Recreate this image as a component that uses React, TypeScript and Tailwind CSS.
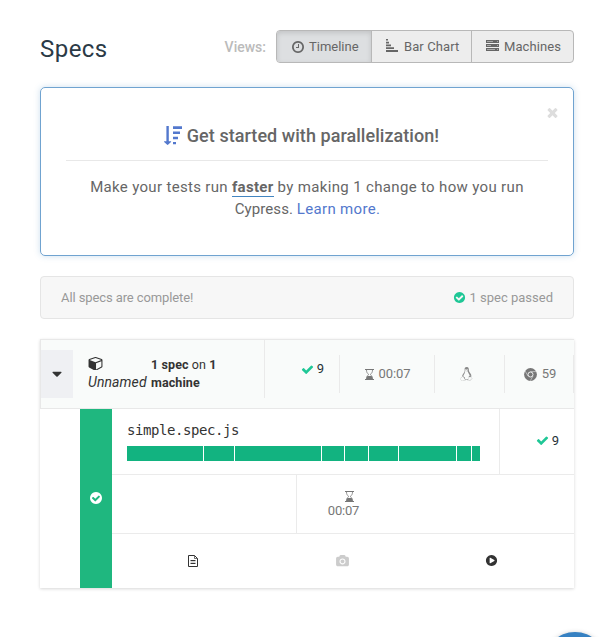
import React from "react";
import { FaLinux } from "react-icons/fa";

const CLOCK =
  "M1024 544v448q0 14-9 23t-23 9h-320q-14 0-23-9t-9-23v-64q0-14 9-23t23-9h224v-352q0-14 9-23t23-9h64q14 0 23 9t9 23zm416 352q0-148-73-273t-198-198-273-73-273 73-198 198-73 273 73 273 198 198 273 73 273-73 198-198 73-273zm224 0q0 209-103 385.5t-279.5 279.5-385.5 103-385.5-103-279.5-279.5-103-385.5 103-385.5 279.5-279.5 385.5-103 385.5 103 279.5 279.5 103 385.5z";
const CHECK =
  "M1671 566q0 40-28 68l-724 724-136 136q-28 28-68 28t-68-28l-136-136-362-362q-28-28-28-68t28-68l136-136q28-28 68-28t68 28l294 295 656-657q28-28 68-28t68 28l136 136q28 28 28 68z";
const CHECK_CIRCLE =
  "M1412 734q0-28-18-46l-91-90q-19-19-45-19t-45 19l-408 407-226-226q-19-19-45-19t-45 19l-91 90q-18 18-18 46 0 27 18 45l362 362q19 19 45 19 27 0 46-19l543-543q18-18 18-45zm252 162q0 209-103 385.5t-279.5 279.5-385.5 103-385.5-103-279.5-279.5-103-385.5 103-385.5 279.5-279.5 385.5-103 385.5 103 279.5 279.5 103 385.5z";
const CARET =
  "M1408 704q0 26-19 45l-448 448q-19 19-45 19t-45-19l-448-448q-19-19-19-45t19-45 45-19h896q26 0 45 19t19 45z";
const TIMES =
  "M1490 1322q0 40-28 68l-136 136q-28 28-68 28t-68-28l-294-294-294 294q-28 28-68 28t-68-28l-136-136q-28-28-28-68t28-68l294-294-294-294q-28-28-28-68t28-68l136-136q28-28 68-28t68 28l294 294 294-294q28-28 68-28t68 28l136 136q28 28 28 68t-28 68l-294 294 294 294q28 28 28 68z";
const CUBE =
  "M832 1727l640-349v-636l-640 233v752zm-64-865l698-254-698-254-698 254zm832-254v768q0 35-18 65t-49 47l-704 384q-28 16-61 16t-61-16l-704-384q-31-17-49-47t-18-65v-768q0-40 23-73t61-47l704-256q22-8 44-8t44 8l704 256q38 14 61 47t23 73z";
const CAMERA =
  "M960 672q119 0 203.5 84.5t84.5 203.5-84.5 203.5-203.5 84.5-203.5-84.5-84.5-203.5 84.5-203.5 203.5-84.5zm704-416q106 0 181 75t75 181v896q0 106-75 181t-181 75h-1408q-106 0-181-75t-75-181v-896q0-106 75-181t181-75h224l51-136q19-49 69.5-84.5t103.5-35.5h512q53 0 103.5 35.5t69.5 84.5l51 136h224zm-704 1152q185 0 316.5-131.5t131.5-316.5-131.5-316.5-316.5-131.5-316.5 131.5-131.5 316.5 131.5 316.5 316.5 131.5z";
const PLAY =
  "M896 128q209 0 385.5 103t279.5 279.5 103 385.5-103 385.5-279.5 279.5-385.5 103-385.5-103-279.5-279.5-103-385.5 103-385.5 279.5-279.5 385.5-103zm384 823q32-18 32-55t-32-55l-544-320q-31-19-64-1-32 19-32 56v640q0 37 32 56 16 8 32 8 17 0 32-9z";

function Glyph({ d, box = "0 0 1792 1792", className }: { d: string; box?: string; className: string }) {
  return (
    <svg viewBox={box} className={`shrink-0 ${className}`} fill="currentColor" aria-hidden="true">
      <path d={d} />
    </svg>
  );
}

function BarsIcon() {
  return (
    <svg viewBox="0 0 12 13" className="h-[13px] w-3 shrink-0" fill="currentColor" aria-hidden="true">
      <path d="M0 0h2v1.600H0zM0 2.700h3v1.800H0zM0 5.500h5v1.800H0zM0 8.300h8v1.800H0zM0 11h12v2H0z" />
    </svg>
  );
}

function ServerIcon() {
  return (
    <svg viewBox="0 0 13 11" className="h-[11px] w-[13px] shrink-0" aria-hidden="true">
      <path d="M0 0h13v3H0zM0 4h13v3H0zM0 8h13v3H0z" fill="currentColor" />
      <path d="M1 1.500h6M1 5.500h4M1 9.500h8M11 1.500h1M11 5.500h1M11 9.500h1" stroke="#ededed" strokeWidth=".5" />
    </svg>
  );
}

function SortIcon() {
  return (
    <svg viewBox="0 0 18 19" className="h-[19px] w-[18px] shrink-0 text-[#5378cd]" fill="currentColor" aria-hidden="true">
      <path d="M2.4 0h2.4v15.2h2.1q.6.3.1.8l-3 2.8q-.4.3-.8 0L.1 16q-.4-.6.2-.8h2.1zM9 .3h9v2.6H9zM9 5.4h7v2.5H9zM9 10.800h5v2.4H9zM9 16h3v2.300H9z" />
    </svg>
  );
}

function ChromeIcon() {
  return (
    <svg viewBox="0 0 13 13" className="size-[13px] shrink-0" aria-hidden="true">
      <circle cx="6.5" cy="6.5" r="6.4" fill="currentColor" />
      <path d="M6.500 3.600h5.800M4 8L1.200 3.100M9 8l-2.700 4.800" stroke="#f9fbfa" strokeWidth=".5" />
      <circle cx="6.500" cy="6.500" r="2.500" fill="currentColor" stroke="#f9fbfa" strokeWidth=".9" />
    </svg>
  );
}

function Hourglass() {
  return (
    <svg viewBox="0 0 9 11" className="h-[11px] w-[9px] shrink-0" aria-hidden="true">
      <path d="M0 .5h9M0 10.500h9" stroke="currentColor" />
      <path d="M1.500 1c0 2.500.9 3.300 2.200 4.500C2.400 6.700 1.500 7.500 1.500 10M7.500 1c0 2.500-.9 3.300-2.200 4.500C6.600 6.700 7.500 7.500 7.500 10" fill="none" stroke="currentColor" strokeWidth=".8" />
      <path d="M1.400 10.200c0-1.500.4-2.400 1.100-3.100h4c.7.700 1.100 1.600 1.100 3.100z" fill="currentColor" />
    </svg>
  );
}

function DocIcon() {
  return (
    <svg viewBox="0 0 10 12" className="h-3 w-[10px] shrink-0" fill="none" stroke="currentColor" aria-hidden="true">
      <path d="M.5.5h6l3 3v8h-9z" />
      <path d="M6.500.5v3h3" strokeWidth=".7" />
      <path d="M2.500 5.500h5M2.500 8.500h5" />
      <path d="M2.500 7h5" strokeOpacity=".4" />
    </svg>
  );
}

const tests = [76, 30, 86, 22, 23, 29, 57, 14, 8];

export default function App() {
  return (
    <div className="relative flex h-[637px] w-[614px] flex-col overflow-hidden bg-white pl-10 pr-10 pt-[30px] font-[Roboto,sans-serif] text-[13px] leading-[18px] text-[#333]">
      <header className="flex h-[33px] w-[534px] items-center">
        <h2 className="mt-[5px] flex-1 text-[24px] leading-8 tracking-[0.45px] text-[#2b3a46]">Specs</h2>
        <span className="mr-[10px] text-[14px] font-medium text-[#bbb]">Views:</span>
        <div className="flex h-[33px] w-[298px] rounded-[4px] border border-[#b8b8b8] bg-[#ededed] text-[#666]">
          <button className="flex w-[94px] shrink-0 items-center rounded-l-[3px] bg-[#dddfe1] pl-[14px] shadow-[inset_0_2px_5px_rgba(0,0,0,0.125)]">
            <Glyph d={CLOCK} className="mr-[4px] size-[14px]" />
            Timeline
          </button>
          <button className="flex w-[100px] shrink-0 items-center border-l border-[#b8b8b8] pl-[14px] tracking-[0.1px]">
            <span className="-mt-[2px] mr-[6px]"><BarsIcon /></span>
            Bar Chart
          </button>
          <button className="flex flex-1 items-center border-l border-[#b8b8b8] pl-[14px] tracking-[0.1px]">
            <span className="-mt-[2px] mr-[5px]"><ServerIcon /></span>
            Machines
          </button>
        </div>
      </header>

      <section className="relative mt-6 h-[169px] w-[534px] shrink-0 rounded-[5px] border border-[#70a3d0] px-[25px] pt-9 text-center shadow-[0_0_6px_rgba(60,130,190,0.25)]">
        <Glyph d={TIMES} className="absolute right-[13px] top-[17px] size-[15px] text-[#ddd]" />
        <h3 className="flex h-[37px] items-start justify-center gap-[5px] border-b border-[#e8e8e8] pr-[11px] text-[18px] font-medium leading-[23px] tracking-[0.05px] text-[#666]">
          <span className="mt-[2px]"><SortIcon /></span>
          Get started with parallelization!
        </h3>
        <p className="mt-[15px] text-[15px] leading-[22px] tracking-[0.32px] text-[#666]">
          Make your tests run{" "}
          <span className="border-b border-[#4285c0] font-bold tracking-[0.3px]">faster</span>{" "}
          <span className="tracking-[0.34px]">by making 1 change to how you run</span>
          <br />
          <span className="tracking-[0.08px]">Cypress. </span>
          <a className="-mr-px text-[#5378cd]">Learn more.</a>
        </p>
      </section>

      <section className="mt-5 flex h-[43px] w-[534px] shrink-0 items-center justify-between rounded-[4px] border border-[#e5e5e5] bg-[#f7f7f7] px-5 text-[#999]">
        <span className="tracking-[-0.1px]">All specs are complete!</span>
        <span className="flex items-center">
          <Glyph d={CHECK_CIRCLE} className="mr-[4px] size-[13px] text-[#1fc796]" />
          1 spec passed
        </span>
      </section>

      <section className="mt-5 flex h-[249px] w-[534px] shrink-0 flex-col border-t border-[#e8e8e8] shadow-[0_1px_3px_rgba(0,0,0,0.16)]">
        <div className="flex h-[69px] shrink-0 border-b border-l border-b-[#e8e8e8] border-l-[#e8e8e8] bg-[#f9fbfa]">
          <div className="mt-[10px] flex h-12 w-8 shrink-0 items-center justify-center bg-[#eff0f3]">
            <Glyph d={CARET} className="size-4" />
          </div>
          <div className="flex h-[58px] w-[192px] shrink-0 border-r border-[#eaeaea] pl-[15px]">
            <div className="w-[63px] pt-[16px]">
              <Glyph d={CUBE} box="-128 0 1792 1792" className="-mt-px mb-px size-[15px]" />
              <div className="mt-[2px] text-[14px] italic leading-5 tracking-[0.1px]">Unnamed</div>
            </div>
            <div className="pt-4 text-[12.500px] font-bold tracking-[0.1px]">
              1 spec <span className="font-normal">on</span> 1<br />machine
            </div>
          </div>
          <div className="flex w-[74px] shrink-0 pt-[20px]">
            <div className="flex h-[18px] flex-1 items-center justify-end pr-[15px] text-[#263238]">
              <Glyph d={CHECK} className="mr-[3px] size-[13px] text-[#1fc796]" />9
            </div>
          </div>
          <div className="mt-[15px] flex h-[38px] flex-1 text-[#777]">
            <div className="flex w-[95px] items-center justify-center gap-[5px] border-l border-[#eaeaea] pl-px tracking-[-0.1px]"><Hourglass />00:07</div>
            <div className="flex w-[70px] items-center justify-center border-l border-[#eaeaea] pr-[6px] text-[#888]"><FaLinux className="h-[14px] w-[13px]" /></div>
            <div className="flex w-[70px] items-center justify-center gap-[5px] border-x border-[#eaeaea] pl-[2px]"><ChromeIcon />59</div>
          </div>
        </div>

        <div className="flex min-h-0 flex-1 pl-10">
          <div className="flex w-8 shrink-0 items-center justify-center bg-[#1fb77f] pb-[2px] text-white">
            <Glyph d={CHECK_CIRCLE} className="size-[14px]" />
          </div>
          <div className="flex flex-1 flex-col">
            <div className="flex h-[66px] border-b border-[#ebebeb]">
              <div className="w-[388px] shrink-0 border-r border-[#ebebeb] pl-[15px] pt-[12px]">
                <div className="font-['DejaVu_Sans_Mono',monospace] text-[14px] leading-[18px] tracking-[-0.430px]">simple.spec.js</div>
                <div className="mt-[7px] flex h-[15px] gap-px">
                  {tests.map((w, i) => (
                    <div key={i} className="shrink-0 bg-[#12b380]" style={{ width: w }} />
                  ))}
                </div>
              </div>
              <div className="flex flex-1 items-center justify-end pb-[2px] pr-[15px] text-[#263238]">
                <Glyph d={CHECK} className="mr-[3px] size-[13px] text-[#1fc796]" />9
              </div>
            </div>
            <div className="flex h-[59px] border-b border-[#ebebeb]">
              <div className="w-[184px]" />
              <div className="flex w-[95px] flex-col items-center border-l border-[#ebebeb] pt-[16px] leading-[15px] text-[#777]">
                <span className="ml-[11px] h-[11px]"><Hourglass /></span>
                <span className="mr-px mt-[1px] tracking-[-0.2px]">00:07</span>
              </div>
            </div>
            <div className="flex flex-1 items-center">
              <div className="flex w-[162px] justify-center"><DocIcon /></div>
              <div className="flex w-[137px] justify-center text-[#ccc]"><Glyph d={CAMERA} box="0 0 1920 1792" className="h-[12px] w-[13px]" /></div>
              <div className="flex w-[160px] justify-center pb-px"><Glyph d={PLAY} className="size-[13px]" /></div>
            </div>
          </div>
        </div>
      </section>
      <button aria-label="Help" className="absolute left-[544px] top-[632px] size-[62px] rounded-full bg-[#3681c2] shadow-[0_1px_5px_rgba(0,0,0,0.25)]" />
    </div>
  );
}
